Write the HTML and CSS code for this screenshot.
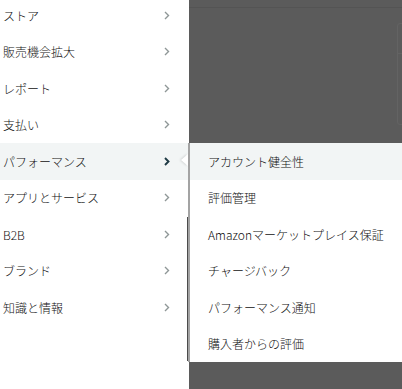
FILE: index.html
```html
<!DOCTYPE html>
<html lang="ja">
<head>
<meta charset="utf-8">
<link rel="stylesheet" href="styles.css">
</head>
<body>
<div class="page">
  <nav class="menu">
    <ul class="menu-list">
      <li class="menu-item"><span>ストア</span><svg class="chev" viewBox="0 0 6 9"><polyline points="1,1 4.5,4.5 1,8"/></svg></li>
      <li class="menu-item"><span>販売機会拡大</span><svg class="chev" viewBox="0 0 6 9"><polyline points="1,1 4.5,4.5 1,8"/></svg></li>
      <li class="menu-item"><span>レポート</span><svg class="chev" viewBox="0 0 6 9"><polyline points="1,1 4.5,4.5 1,8"/></svg></li>
      <li class="menu-item"><span>支払い</span><svg class="chev" viewBox="0 0 6 9"><polyline points="1,1 4.5,4.5 1,8"/></svg></li>
      <li class="menu-item active"><span>パフォーマンス</span><svg class="chev" viewBox="0 0 6 9"><polyline points="1,1 4.5,4.5 1,8"/></svg></li>
      <li class="menu-item"><span>アプリとサービス</span><svg class="chev" viewBox="0 0 6 9"><polyline points="1,1 4.5,4.5 1,8"/></svg></li>
      <li class="menu-item"><span>B2B</span><svg class="chev" viewBox="0 0 6 9"><polyline points="1,1 4.5,4.5 1,8"/></svg></li>
      <li class="menu-item"><span>ブランド</span><svg class="chev" viewBox="0 0 6 9"><polyline points="1,1 4.5,4.5 1,8"/></svg></li>
      <li class="menu-item"><span>知識と情報</span><svg class="chev" viewBox="0 0 6 9"><polyline points="1,1 4.5,4.5 1,8"/></svg></li>
    </ul>
    <div class="scroll-thumb"></div>
  </nav>
  <div class="backdrop">
    <div class="backdrop-rule"></div>
    <div class="edge-card">
      <div class="edge-card-top"></div>
    </div>
  </div>
  <div class="flyout">
    <div class="pointer"></div>
    <ul class="sub-list">
      <li class="sub-item active">アカウント健全性</li>
      <li class="sub-item">評価管理</li>
      <li class="sub-item">Amazonマーケットプレイス保証</li>
      <li class="sub-item">チャージバック</li>
      <li class="sub-item">パフォーマンス通知</li>
      <li class="sub-item">購入者からの評価</li>
    </ul>
  </div>
</div>
</body>
</html>
```

FILE: styles.css
```css
* { box-sizing: border-box; }
html, body {
  margin: 0;
  padding: 0;
  width: 402px;
  height: 389px;
  overflow: hidden;
}
body {
  font-family: "Noto Sans CJK JP", "Noto Sans", sans-serif;
  font-size: 12px;
  font-weight: 300;
  color: #111111;
  background: #5b5b5b;
}
.page {
  position: relative;
  display: flex;
  width: 402px;
  height: 389px;
}
.menu {
  position: relative;
  width: 189px;
  flex: none;
  background: #ffffff;
  height: 389px;
}
.menu-list {
  list-style: none;
  margin: -3px 0 0 0;
  padding: 0;
}
.menu-item {
  display: flex;
  align-items: center;
  justify-content: space-between;
  height: 36.5px;
  padding: 0 19px 0 3px;
}
.menu-item.active {
  background: #f2f5f5;
}
.chev {
  width: 6px;
  height: 9px;
  fill: none;
  stroke: #8f9797;
  stroke-width: 1.4;
}
.menu-item.active .chev {
  stroke: #1f3a44;
  stroke-width: 1.9;
}
.scroll-thumb {
  position: absolute;
  right: 0;
  top: 217px;
  width: 2px;
  height: 144px;
  background: #4c4c4c;
}
.backdrop {
  position: relative;
  flex: 1;
  background: #5b5b5b;
}
.backdrop-rule {
  height: 8px;
  border-bottom: 1px solid #545454;
}
.edge-card {
  position: absolute;
  left: 208px;
  top: 23px;
  width: 20px;
  height: 102px;
  border: 1px solid #636363;
  border-radius: 3px;
}
.edge-card-top {
  height: 30px;
  border-bottom: 1px solid #636363;
}
.flyout {
  position: absolute;
  left: 188px;
  top: 143px;
  width: 214px;
  height: 219px;
  background: #ffffff;
  border-left: 2px solid #a3a3a3;
}
.pointer {
  position: absolute;
  left: -9px;
  top: 11px;
  width: 0;
  height: 0;
  border-top: 6.5px solid transparent;
  border-bottom: 6.5px solid transparent;
  border-right: 7px solid #ffffff;
  filter: drop-shadow(-1px 0 1px rgba(0, 0, 0, 0.15));
}
.sub-list {
  list-style: none;
  margin: 0;
  padding: 0;
}
.sub-item {
  display: flex;
  align-items: center;
  height: 36.5px;
  padding-left: 18px;
  white-space: nowrap;
}
.sub-item.active {
  background: #f2f5f5;
}
```
